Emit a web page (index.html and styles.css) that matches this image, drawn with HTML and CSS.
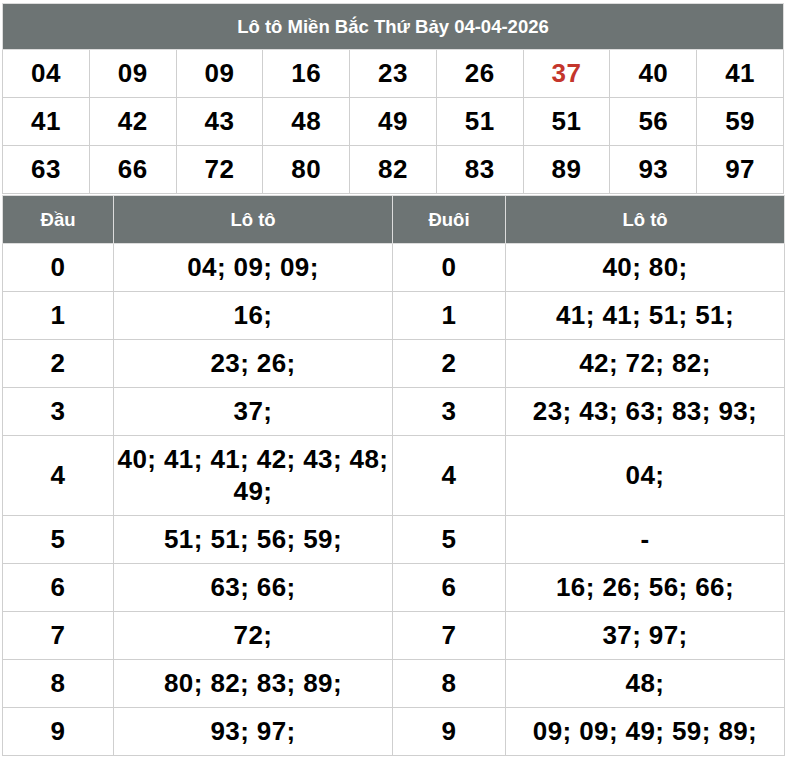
FILE: index.html
```html
<!DOCTYPE html>
<html lang="vi">
<head>
<meta charset="utf-8">
<title>Lô tô Miền Bắc</title>
<link rel="stylesheet" href="styles.css">
</head>
<body>
<div class="wrap">
  <table class="loto">
    <thead>
      <tr><th colspan="9" class="title">Lô tô Miền Bắc Thứ Bảy 04-04-2026</th></tr>
    </thead>
    <tbody>
      <tr><td>04</td><td>09</td><td>09</td><td>16</td><td>23</td><td>26</td><td class="hot">37</td><td>40</td><td>41</td></tr>
      <tr><td>41</td><td>42</td><td>43</td><td>48</td><td>49</td><td>51</td><td>51</td><td>56</td><td>59</td></tr>
      <tr><td>63</td><td>66</td><td>72</td><td>80</td><td>82</td><td>83</td><td>89</td><td>93</td><td>97</td></tr>
    </tbody>
  </table>
  <table class="dd">
    <colgroup>
      <col class="c-key"><col class="c-val"><col class="c-key2"><col class="c-val">
    </colgroup>
    <thead>
      <tr><th>Đầu</th><th>Lô tô</th><th>Đuôi</th><th>Lô tô</th></tr>
    </thead>
    <tbody>
      <tr><td>0</td><td>04; 09; 09;</td><td>0</td><td>40; 80;</td></tr>
      <tr><td>1</td><td>16;</td><td>1</td><td>41; 41; 51; 51;</td></tr>
      <tr><td>2</td><td>23; 26;</td><td>2</td><td>42; 72; 82;</td></tr>
      <tr><td>3</td><td>37;</td><td>3</td><td>23; 43; 63; 83; 93;</td></tr>
      <tr><td>4</td><td>40; 41; 41; 42; 43; 48; 49;</td><td>4</td><td>04;</td></tr>
      <tr><td>5</td><td>51; 51; 56; 59;</td><td>5</td><td>-</td></tr>
      <tr><td>6</td><td>63; 66;</td><td>6</td><td>16; 26; 56; 66;</td></tr>
      <tr><td>7</td><td>72;</td><td>7</td><td>37; 97;</td></tr>
      <tr><td>8</td><td>80; 82; 83; 89;</td><td>8</td><td>48;</td></tr>
      <tr><td>9</td><td>93; 97;</td><td>9</td><td>09; 09; 49; 59; 89;</td></tr>
    </tbody>
  </table>
</div>
</body>
</html>
```
FILE: styles.css
```css
html, body {
  margin: 0;
  padding: 0;
  background: #fff;
}

.wrap {
  padding: 3px 3px 0 2px;
  font-family: "Liberation Sans", Arial, sans-serif;
  color: #000;
}

table {
  width: 782px;
  border-collapse: collapse;
  table-layout: fixed;
}

th {
  background: #6d7474;
  color: #fff;
  font-weight: bold;
  font-size: 18.5px;
  text-align: center;
  border: 1px solid #dcdcdc;
}

td {
  border: 1px solid #cfcfcf;
  text-align: center;
  font-weight: bold;
  font-size: 26px;
  line-height: 32px;
  letter-spacing: 0.4px;
  padding: 7px 0 8px;
}

.loto .title {
  height: 45px;
  padding: 0;
}

.loto td.hot {
  color: #c4362c;
}

.dd {
  margin-top: 1px;
}

.dd th {
  height: 47px;
  padding: 0;
}

.dd td {
  padding: 7px 1px 8px;
}

.c-key { width: 111px; }
.c-val { width: 279px; }
.c-key2 { width: 113px; }
```
